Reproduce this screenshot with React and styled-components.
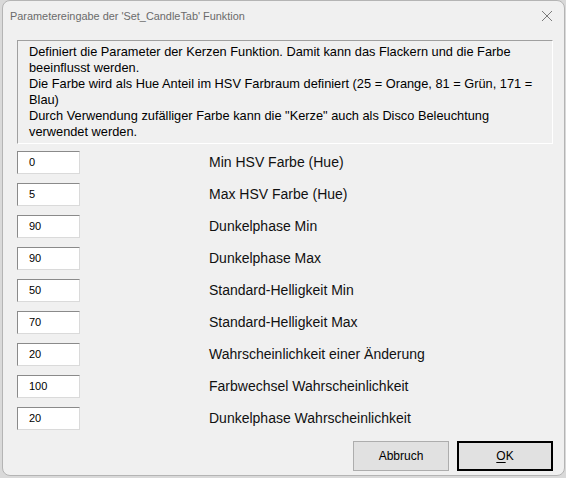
import React from "react";
import styled, { createGlobalStyle } from "styled-components";

const GlobalStyle = createGlobalStyle`
  html, body { margin: 0; padding: 0; background: #d9d9d9; }
  * { box-sizing: border-box; }
`;

const Window = styled.div`
  width: 563px;
  height: 476px;
  margin: 0 0 0 2px;
  border: 1px solid #b4b4b4;
  border-radius: 8px;
  background: #f0f0f0;
  display: flex;
  flex-direction: column;
  overflow: hidden;
  font-family: "Liberation Sans", Arial, sans-serif;
`;

const TitleBar = styled.div`
  height: 30px;
  display: flex;
  align-items: center;
  justify-content: space-between;
  padding: 0 10px 0 7px;
`;

const Title = styled.span`
  font-size: 10.9px;
  color: #6b6b6b;
`;

const CloseIcon = styled.svg`
  width: 12px;
  height: 12px;
  margin-right: 1px;
`;

const Body = styled.div`
  flex: 1;
  display: flex;
  flex-direction: column;
  padding: 9px 11px 0 14px;
`;

const Description = styled.div`
  height: 104px;
  border-top: 1px solid #9f9f9f;
  border-left: 1px solid #9f9f9f;
  border-right: 1px solid #ffffff;
  border-bottom: 1px solid #ffffff;
  padding: 3px 10px 0 11px;
  font-size: 12.8px;
  line-height: 16px;
  color: #000;
`;

const Rows = styled.div`
  display: grid;
  grid-template-columns: 63px 1fr;
  grid-auto-rows: 23px;
  row-gap: 9px;
  column-gap: 129px;
  align-items: center;
  margin-top: 7px;
`;

const Field = styled.div`
  height: 23px;
  background: #fff;
  border-top: 1px solid #8a8a8a;
  border-left: 1px solid #8a8a8a;
  border-right: 1px solid #dadada;
  border-bottom: 1px solid #dadada;
  font-size: 11px;
  line-height: 21px;
  padding-left: 11px;
  color: #000;
`;

const Label = styled.span`
  font-size: 14px;
  color: #111;
  line-height: 16px;
  margin-top: -2px;
`;

const Footer = styled.div`
  display: flex;
  justify-content: flex-end;
  gap: 8px;
  margin-top: 11px;
`;

const Button = styled.button`
  width: 96px;
  height: 30px;
  background: #e1e1e1;
  border: 1px solid ${(p) => (p.$default ? "#000" : "#adadad")};
  box-shadow: ${(p) => (p.$default ? "inset 0 0 0 1px #000" : "none")};
  font-family: "Liberation Sans", Arial, sans-serif;
  font-size: 12px;
  color: #000;
  padding: 0;
  u { text-decoration: underline; text-underline-offset: 2px; }
`;

const params = [
  ["0", "Min HSV Farbe (Hue)"],
  ["5", "Max HSV Farbe (Hue)"],
  ["90", "Dunkelphase Min"],
  ["90", "Dunkelphase Max"],
  ["50", "Standard-Helligkeit Min"],
  ["70", "Standard-Helligkeit Max"],
  ["20", "Wahrscheinlichkeit einer Änderung"],
  ["100", "Farbwechsel Wahrscheinlichkeit"],
  ["20", "Dunkelphase Wahrscheinlichkeit"],
];

export default function App() {
  return (
    <>
      <GlobalStyle />
      <Window>
        <TitleBar>
          <Title>Parametereingabe der 'Set_CandleTab' Funktion</Title>
          <CloseIcon viewBox="0 0 12 12">
            <path d="M1 1 L11 11 M11 1 L1 11" stroke="#7a7a7a" strokeWidth="1" fill="none" />
          </CloseIcon>
        </TitleBar>
        <Body>
          <Description>
            Definiert die Parameter der Kerzen Funktion. Damit kann das Flackern und die Farbe
            <br />
            beeinflusst werden.
            <br />
            Die Farbe wird als Hue Anteil im HSV Farbraum definiert (25 = Orange, 81 = Grün, 171 =
            <br />
            Blau)
            <br />
            Durch Verwendung zufälliger Farbe kann die "Kerze" auch als Disco Beleuchtung
            <br />
            verwendet werden.
          </Description>
          <Rows>
            {params.map(([v, l], i) => (
              <React.Fragment key={i}>
                <Field>{v}</Field>
                <Label>{l}</Label>
              </React.Fragment>
            ))}
          </Rows>
          <Footer>
            <Button>Abbruch</Button>
            <Button $default>
              <u>O</u>K
            </Button>
          </Footer>
        </Body>
      </Window>
    </>
  );
}
